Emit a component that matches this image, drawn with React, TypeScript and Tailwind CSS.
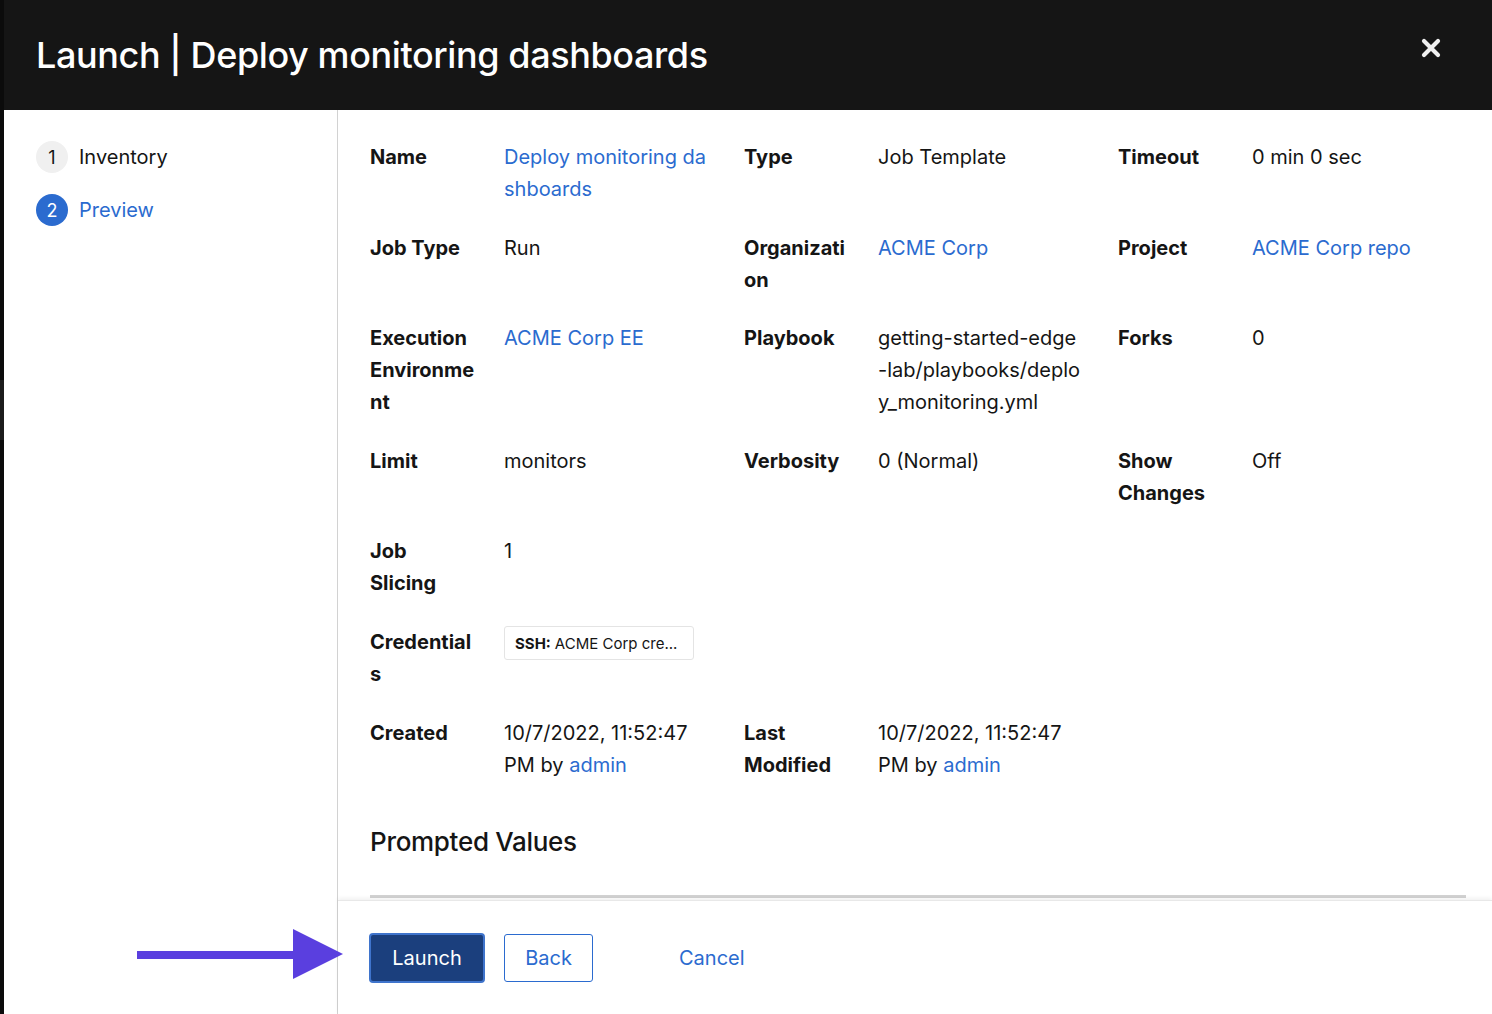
import React from "react";

const FONT = { fontFamily: "Inter, 'Noto Sans', sans-serif" };
const BLUE = "text-[#2b6bcf]";

function Lines({ lines, className = "" }: { lines: React.ReactNode[]; className?: string }) {
  return (
    <div className={className}>
      {lines.map((l, i) => (
        <div key={i}>{l}</div>
      ))}
    </div>
  );
}

function Label({ lines }: { lines: string[] }) {
  return <Lines lines={lines} className="font-bold text-[#151515]" />;
}

function Value({ lines, link = false }: { lines: React.ReactNode[]; link?: boolean }) {
  return <Lines lines={lines} className={link ? BLUE : "text-[#151515]"} />;
}

export default function App() {
  return (
    <div className="w-[1492px] h-[1014px] flex bg-[#0b0b0b] overflow-hidden relative" style={FONT}>
      <div className="w-[4px] shrink-0 flex flex-col">
        <div className="h-[380px] bg-[#0b0b0b]" />
        <div className="h-[60px] bg-[#1c1c1c]" />
        <div className="flex-1 bg-[#0b0b0b]" />
      </div>
      <div className="flex-1 min-w-0 flex flex-col bg-white">
        <header className="h-[110px] bg-[#151515] flex items-center justify-between pl-[32px] pr-[51px]">
          <h1 className="text-white text-[36px] font-medium tracking-[-0.4px] leading-none">
            Launch | Deploy monitoring dashboards
          </h1>
          <svg width="20" height="20" viewBox="0 0 20 20" className="-mt-[14px]">
            <path d="M3 3 L17 17 M17 3 L3 17" stroke="#f0f0f0" strokeWidth="4.2" strokeLinecap="round" />
          </svg>
        </header>
        <div className="flex-1 flex min-h-0">
          <aside className="w-[334px] shrink-0 border-r border-[#d2d2d2] pt-[31px] pl-[32px] flex flex-col gap-[21px] text-[20px]">
            <div className="flex items-center gap-[11px]">
              <div className="w-[32px] h-[32px] rounded-full bg-[#f0f0f0] flex items-center justify-center text-[18px] text-[#151515]">
                1
              </div>
              <span className="text-[#151515]">Inventory</span>
            </div>
            <div className="flex items-center gap-[11px]">
              <div className="w-[32px] h-[32px] rounded-full bg-[#2b6bcf] flex items-center justify-center text-[18px] text-white">
                2
              </div>
              <span className={BLUE}>Preview</span>
            </div>
          </aside>
          <main className="flex-1 flex flex-col min-w-0">
            <div className="flex-1 pl-[32px] pr-[26px] pt-[31px] text-[20px] leading-[32px] flex flex-col">
              <div className="grid grid-cols-[134px_240px_134px_240px_134px_1fr] gap-y-[26.6px]">
                <Label lines={["Name"]} />
                <Value link lines={["Deploy monitoring da", "shboards"]} />
                <Label lines={["Type"]} />
                <Value lines={["Job Template"]} />
                <Label lines={["Timeout"]} />
                <Value lines={["0 min 0 sec"]} />

                <Label lines={["Job Type"]} />
                <Value lines={["Run"]} />
                <Label lines={["Organizati", "on"]} />
                <Value link lines={["ACME Corp"]} />
                <Label lines={["Project"]} />
                <Value link lines={["ACME Corp repo"]} />

                <Label lines={["Execution", "Environme", "nt"]} />
                <Value link lines={["ACME Corp EE"]} />
                <Label lines={["Playbook"]} />
                <Value lines={["getting-started-edge", "-lab/playbooks/deplo", "y_monitoring.yml"]} />
                <Label lines={["Forks"]} />
                <Value lines={["0"]} />

                <Label lines={["Limit"]} />
                <Value lines={["monitors"]} />
                <Label lines={["Verbosity"]} />
                <Value lines={["0 (Normal)"]} />
                <Label lines={["Show", "Changes"]} />
                <Value lines={["Off"]} />

                <Label lines={["Job", "Slicing"]} />
                <Value lines={["1"]} />
                <div className="col-span-4" />

                <Label lines={["Credential", "s"]} />
                <div>
                  <span className="inline-flex items-center h-[34px] px-[10px] border border-[#e4e4e4] rounded-[3px] text-[15px] leading-none text-[#151515] w-[190px]">
                    <b className="font-bold mr-[4px]">SSH:</b> ACME Corp cre...
                  </span>
                </div>
                <div className="col-span-4" />

                <Label lines={["Created"]} />
                <Value
                  lines={[
                    "10/7/2022, 11:52:47",
                    <>
                      PM by <span className={BLUE}>admin</span>
                    </>,
                  ]}
                />
                <Label lines={["Last", "Modified"]} />
                <Value
                  lines={[
                    "10/7/2022, 11:52:47",
                    <>
                      PM by <span className={BLUE}>admin</span>
                    </>,
                  ]}
                />
                <div className="col-span-2" />
              </div>
              <h2 className="mt-[45px] text-[26px] leading-[32px] font-medium text-[#151515] tracking-[-0.3px]">
                Prompted Values
              </h2>
              <div className="mt-auto mb-[2px] h-[3px] bg-[#d2d2d2]" />
            </div>
            <footer className="h-[114px] shrink-0 border-t border-[#e8e8e8] shadow-[0_-2px_4px_rgba(0,0,0,0.06)] flex items-center pl-[31px] text-[20px]">
              <button className="w-[116px] h-[50px] rounded-[4px] bg-[#1b3f7d] border-2 border-[#3f74cc] text-white">
                Launch
              </button>
              <button className="ml-[19px] w-[89px] h-[48px] rounded-[3px] border border-[#2b6bcf] text-[#2b6bcf] bg-white">
                Back
              </button>
              <button className="ml-[86px] text-[#2b6bcf]">Cancel</button>
            </footer>
          </main>
        </div>
      </div>
      <svg className="absolute left-[137px] top-[929px]" width="206" height="50" viewBox="0 0 206 50">
        <rect x="0" y="22" width="160" height="8" fill="#5a3fdf" />
        <polygon points="156,0 206,25 156,50" fill="#5a3fdf" />
      </svg>
    </div>
  );
}
